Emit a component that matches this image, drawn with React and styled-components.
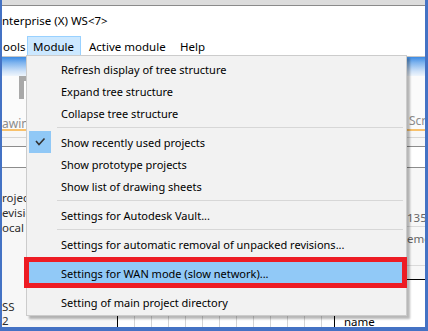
import React from 'react';
import styled, { createGlobalStyle } from 'styled-components';

const GlobalStyle = createGlobalStyle`
  html, body {
    margin: 0;
    padding: 0;
    background: #ffffff;
  }
  body {
    font-family: "Noto Sans", "Open Sans", sans-serif;
    font-size: 11px;
    color: #000;
  }
`;

const Frame = styled.div`
  position: relative;
  width: 428px;
  height: 331px;
  box-sizing: border-box;
  border-left: 2px solid #4472c4;
  border-right: 3px solid #4472c4;
  border-bottom: 4px solid #4472c4;
  overflow: hidden;
  display: flex;
  flex-direction: column;
  background: #ffffff;
`;

const ToolStrip = styled.div`
  height: 5px;
  flex: none;
  background: #dcdcdc;
  border-bottom: 1px solid #8a8a8a;
  overflow: hidden;
`;

const TitleArea = styled.div`
  height: 30px;
  flex: none;
  display: flex;
  align-items: center;
  font-size: 11.5px;
  line-height: 1;
  padding-bottom: 1px;
  box-sizing: border-box;
`;

const MenuBar = styled.div`
  height: 20px;
  flex: none;
  display: flex;
  align-items: stretch;
  font-size: 11.5px;
`;

const BarItem = styled.div`
  display: flex;
  align-items: center;
  box-sizing: border-box;
  width: ${p => p.w}px;
  padding-left: ${p => p.pl}px;
  border: 1px solid ${p => (p.active ? '#99d1ff' : 'transparent')};
  background: ${p => (p.active ? '#cce8ff' : 'transparent')};
  white-space: nowrap;
`;

const Workspace = styled.div`
  flex: 1;
  display: flex;
  flex-direction: column;
  background: #f5f5f5;
`;

const RibbonTabs = styled.div`
  height: 19px;
  flex: none;
  border-top: 1px solid #c8c8c8;
  background: linear-gradient(#3c8be4 0%, #7fb4ee 30%, #cfe2f8 75%, #eef5fc 100%);
`;

const RibbonBody = styled.div`
  height: 55px;
  flex: none;
  background: #fbfbfb;
  display: flex;
  justify-content: space-between;
  border-bottom: 2px solid #f8c16c;
  box-sizing: border-box;
`;

const RibbonLeft = styled.div`
  width: 24px;
  display: flex;
  flex-direction: column;
  align-items: flex-end;
`;

const ToolButton = styled.div`
  width: 7px;
  height: 23px;
  background: #a9a9a9;
  box-sizing: border-box;
  border-top: 5px solid #a9a9a9;
  border-left: 5px solid #a9a9a9;
  &::after {
    content: '';
    display: block;
    width: 2px;
    height: 18px;
    background: #ffffff;
  }
`;

const GroupLabel = styled.div`
  color: #8c8c8c;
  font-size: 12px;
  line-height: 14px;
  margin-top: ${p => p.mt}px;
  white-space: nowrap;
  padding-left: ${p => p.pl || 0}px;
  width: ${p => p.w}px;
  box-sizing: border-box;
  overflow: hidden;
`;

const RibbonRight = styled.div`
  width: 18px;
  display: flex;
  flex-direction: column;
`;

const ThinRow = styled.div`
  height: ${p => p.h}px;
  flex: none;
  background: ${p => p.bg || '#f7f7f7'};
  border-bottom: 1px solid ${p => p.line};
`;

const Lower = styled.div`
  flex: 1;
  display: flex;
  flex-direction: column;
`;

const PropsArea = styled.div`
  height: 111px;
  flex: none;
  display: flex;
  justify-content: space-between;
  background: #f7f7f7;
`;

const PropCol = styled.div`
  display: flex;
  flex-direction: column;
  width: ${p => p.w}px;
  padding-top: ${p => p.pt}px;
  overflow: hidden;
`;

const PropText = styled.div`
  height: ${p => p.h || 15}px;
  line-height: ${p => p.h || 15}px;
  font-size: 11.5px;
  white-space: nowrap;
  overflow: hidden;
  border-bottom: ${p => (p.line ? '1px solid #dadada' : 'none')};
  color: ${p => p.c || '#2e2e2e'};
`;

const TableArea = styled.div`
  flex: 1;
  display: flex;
  background: #ffffff;
`;

const RowHeads = styled.div`
  width: 115px;
  flex: none;
  padding-top: 21px;
  background: #f7f7f7;
`;

const HeadText = styled.div`
  width: 24px;
  height: 14px;
  line-height: 14px;
  font-size: 11.5px;
  overflow: hidden;
  color: #2e2e2e;
`;

const Grid = styled.div`
  width: 217px;
  flex: none;
  border-left: 1px solid #000;
  border-top: 1px solid #000;
  box-sizing: border-box;
  background-image: linear-gradient(90deg, #d4d4d4 1px, transparent 1px);
  background-size: 17px 100%;
  background-position: 16px 0;
`;

const NameCol = styled.div`
  flex: 1;
  border-left: 1px solid #000;
  border-top: 1px solid #000;
  padding: 35px 0 0 9px;
  line-height: 14px;
  font-size: 11.5px;
`;

const DropMenu = styled.div`
  position: absolute;
  left: 24px;
  top: 55px;
  width: 381px;
  box-sizing: border-box;
  background: #f2f2f2;
  border: 1px solid #cccccc;
  padding: 2px;
  box-shadow: 3px 3px 2px rgba(0, 0, 0, 0.28);
  display: flex;
  flex-direction: column;
`;

const MenuRow = styled.div`
  height: 22px;
  display: flex;
  align-items: center;
  background: ${p => (p.hover ? '#91c9f7' : 'transparent')};
  white-space: nowrap;
`;

const IconCell = styled.div`
  width: 22px;
  height: 22px;
  flex: none;
  margin-right: 10px;
  display: flex;
  align-items: center;
  justify-content: center;
  background: ${p => (p.checked ? '#90c8f6' : 'transparent')};
`;

const Separator = styled.div`
  height: 7px;
  display: flex;
  align-items: center;
  padding-left: 28px;
  padding-right: 1px;
  &::after {
    content: '';
    flex: 1;
    height: 1px;
    background: #d7d7d7;
  }
`;

const RedMark = styled.div`
  position: absolute;
  left: 22px;
  top: 257px;
  width: 383px;
  height: 31px;
  box-sizing: border-box;
  border: 5px solid #ed1c24;
  pointer-events: none;
`;

const CheckIcon = () => (
  <svg width="22" height="22" viewBox="0 0 22 22">
    <polyline points="7,10 10,13.5 15.5,7.5" fill="none" stroke="#333" strokeWidth="1.6" />
  </svg>
);

const StripIcons = () => (
  <svg width="423" height="5" viewBox="0 0 423 5">
    <rect x="0" y="0" width="30" height="5" fill="#b9c7d8" />
    <rect x="21" y="1" width="1" height="4" fill="#555" />
    <path d="M146 5 L150 0" stroke="#c98a2c" strokeWidth="1.5" />
    <rect x="163" y="1" width="3" height="4" fill="#d44a2e" />
    <rect x="167" y="0" width="5" height="5" fill="#5a7fb8" />
    <rect x="178" y="1" width="12" height="4" fill="#8a5a2e" rx="2" />
    <rect x="222" y="2" width="2" height="3" fill="#e06a20" />
    <rect x="231" y="0" width="8" height="5" fill="#8a6a3e" rx="2" />
    <rect x="289" y="2" width="2" height="3" fill="#2a6fc4" />
    <rect x="320" y="3" width="6" height="2" fill="#2a6fc4" />
    <rect x="334" y="3" width="12" height="2" fill="#2a6fc4" />
    <rect x="354" y="3" width="12" height="2" fill="#2a6fc4" />
    <rect x="374" y="3" width="14" height="2" fill="#2a6fc4" />
    <rect x="394" y="0" width="13" height="4" fill="none" stroke="#2a6fc4" />
  </svg>
);

const items = [
  { label: 'Refresh display of tree structure' },
  { label: 'Expand tree structure' },
  { label: 'Collapse tree structure' },
  { sep: true },
  { label: 'Show recently used projects', checked: true },
  { label: 'Show prototype projects' },
  { label: 'Show list of drawing sheets' },
  { sep: true },
  { label: 'Settings for Autodesk Vault...' },
  { sep: true },
  { label: 'Settings for automatic removal of unpacked revisions...' },
  { sep: true },
  { label: 'Settings for WAN mode (slow network)...', hover: true },
  { sep: true },
  { label: 'Setting of main project directory' },
];

const App = () => {
  return (
    <>
      <GlobalStyle />
      <Frame>
        <ToolStrip>
          <StripIcons />
        </ToolStrip>
        <TitleArea>nterprise (X) WS&lt;7&gt;</TitleArea>
        <MenuBar>
          <BarItem w={25} pl={0}>ools</BarItem>
          <BarItem w={54} pl={5} active>Module</BarItem>
          <BarItem w={91} pl={7}>Active module</BarItem>
          <BarItem w={50} pl={7}>Help</BarItem>
        </MenuBar>
        <Workspace>
          <RibbonTabs />
          <RibbonBody>
            <RibbonLeft>
              <ToolButton />
              <GroupLabel mt={18} w={24}>awin</GroupLabel>
            </RibbonLeft>
            <RibbonRight>
              <GroupLabel mt={38} w={18} pl={2}>Scr</GroupLabel>
            </RibbonRight>
          </RibbonBody>
          <ThinRow h={6} line="#d6d6d6" />
          <ThinRow h={8} line="#8c8c8c" />
          <ThinRow h={20} bg="#ffffff" line="#8c8c8c" />
          <Lower>
            <PropsArea>
              <PropCol w={24} pt={22}>
                <PropText>roject</PropText>
                <PropText>evisio</PropText>
                <PropText>ocal m</PropText>
              </PropCol>
              <PropCol w={18} pt={42}>
                <PropText h={16} line c="#666">1354</PropText>
                <PropText h={23} c="#666">emon</PropText>
                <PropText h={15} line />
              </PropCol>
            </PropsArea>
            <TableArea>
              <RowHeads>
                <HeadText>SS</HeadText>
                <HeadText>2</HeadText>
              </RowHeads>
              <Grid />
              <NameCol>name</NameCol>
            </TableArea>
          </Lower>
        </Workspace>

        <DropMenu>
          {items.map((it, i) =>
            it.sep ? (
              <Separator key={i} />
            ) : (
              <MenuRow key={i} hover={it.hover}>
                <IconCell checked={it.checked}>{it.checked && <CheckIcon />}</IconCell>
                {it.label}
              </MenuRow>
            )
          )}
        </DropMenu>
        <RedMark />
      </Frame>
    </>
  );
};

export default App;
